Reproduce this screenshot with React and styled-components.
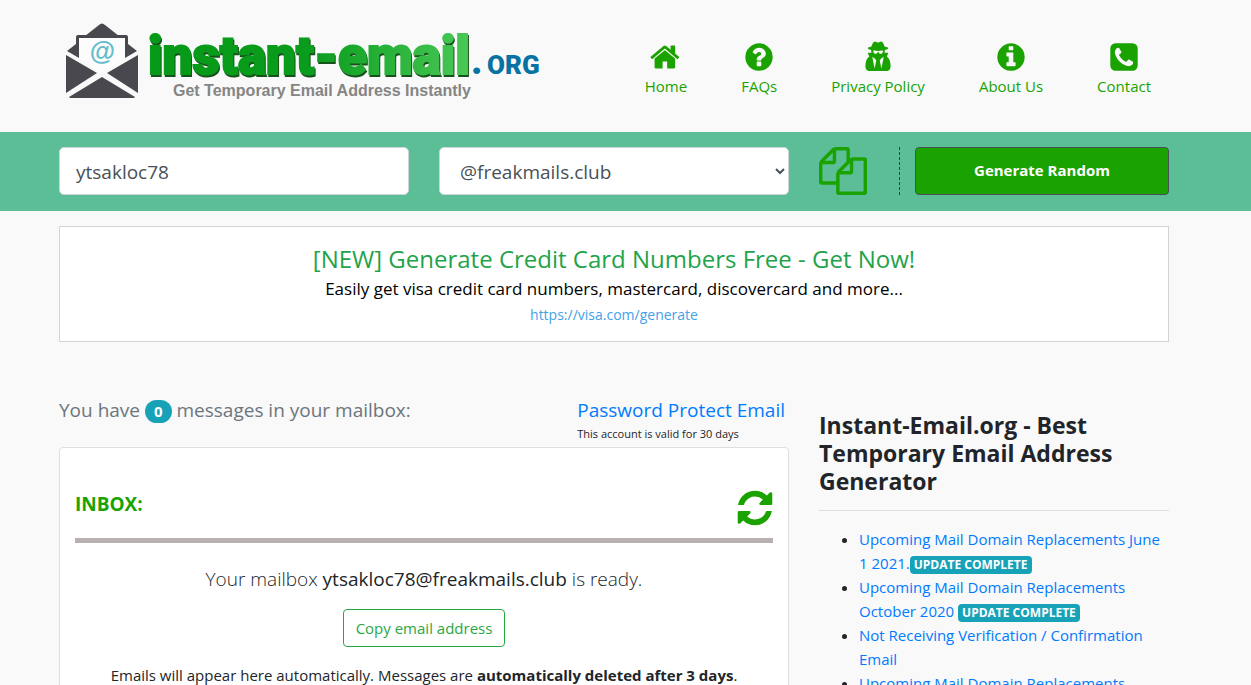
import React, { useState } from 'react';
import styled, { createGlobalStyle } from 'styled-components';

const GlobalStyle = createGlobalStyle`
  * {
    box-sizing: border-box;
  }

  body {
    margin: 0;
    background: #f9f9f9;
    color: #212529;
    font-family: 'Open Sans', 'Noto Sans', sans-serif;
    font-size: 15px;
    line-height: 24px;
  }

  a {
    color: #007bff;
    text-decoration: none;
  }
`;

const Band = styled.div`
  padding: 0 38px 0 15px;
  background: ${(props) => props.$color || 'transparent'};
`;

const Container = styled.div`
  width: 100%;
  max-width: 1110px;
  margin: 0 auto;
`;

const HeaderRow = styled(Container)`
  display: flex;
  align-items: flex-start;
  justify-content: space-between;
  min-height: 132px;
  padding: 16px 18px 0 0;
`;

const LogoLink = styled.a`
  display: block;
  line-height: 0;
`;

const Nav = styled.nav`
  display: flex;
  gap: 54px;
  padding-top: 25px;
`;

const NavLink = styled.a`
  display: flex;
  flex-direction: column;
  align-items: center;
  gap: 1px;
  color: #1aa300;
`;

const Toolbar = styled(Container)`
  display: grid;
  grid-template-columns: repeat(3, minmax(0, 1fr));
  gap: 30px;
  padding: 15px 0 16px;
`;

const MailInput = styled.input`
  width: 100%;
  height: 48px;
  padding: 10px 16px 8px;
  border: 1px solid #ced4da;
  border-radius: 5px;
  background: #fff;
  color: #495057;
  font-family: inherit;
  font-size: 19px;
`;

const DomainSelect = styled.select`
  width: 100%;
  height: 48px;
  padding: 10px 0 8px 16px;
  border: 1px solid #ced4da;
  border-radius: 5px;
  background: #fff;
  color: #495057;
  font-family: inherit;
  font-size: 19px;
`;

const ToolbarActions = styled.div`
  display: flex;
`;

const IconButton = styled.button`
  display: flex;
  align-items: center;
  padding: 0;
  border: none;
  background: none;
  color: #1aa300;
  cursor: pointer;
`;

const GenerateArea = styled.div`
  flex: 1;
  margin-left: 32px;
  padding-left: 15px;
  border-left: 1px dashed #343a40;
`;

const GenerateButton = styled.button`
  width: 100%;
  height: 48px;
  padding: 0 0 2px;
  border: 1px solid #495057;
  border-radius: 4px;
  background: #1aa300;
  color: #fff;
  font-family: inherit;
  font-size: 15px;
  font-weight: 700;
  cursor: pointer;
`;

const AdBox = styled.div`
  margin-top: 15px;
  padding: 16px 16px 14px;
  border: 1px solid #d3d3d3;
  background: #fff;
  color: #000;
  text-align: center;
`;

const AdTitle = styled.a`
  display: block;
  color: #1fa34a;
  font-size: 24px;
  line-height: 32px;
`;

const AdText = styled.p`
  margin: 0;
  font-size: 17px;
  line-height: 28px;
`;

const AdLink = styled.a`
  display: block;
  color: #43a1e8;
  font-size: 14px;
`;

const Columns = styled(Container)`
  display: grid;
  grid-template-columns: minmax(0, 730fr) minmax(0, 350fr);
  gap: 30px;
  padding-top: 52px;
`;

const StatusRow = styled.div`
  display: flex;
  justify-content: space-between;
  height: 53px;
`;

const Status = styled.div`
  color: #6c757d;
  font-size: 19px;
  line-height: 32px;
`;

const CountBadge = styled.span`
  display: inline-block;
  padding: 0 9px;
  border-radius: 12px;
  background: #17a2b8;
  color: #fff;
  font-size: 15px;
  font-weight: 700;
  line-height: 23px;
`;

const Protect = styled.div`
  padding-right: 4px;
`;

const ProtectLink = styled.a`
  display: block;
  font-size: 19px;
  line-height: 32px;
`;

const ProtectNote = styled.div`
  font-size: 11px;
  line-height: 16px;
  color: #212529;
`;

const Card = styled.section`
  padding: 42px 15px 16px;
  border: 1px solid #dfdfdf;
  border-radius: 4px;
  background: #fff;
  text-align: center;
`;

const CardHeader = styled.div`
  display: flex;
  align-items: flex-start;
  justify-content: space-between;
  padding-bottom: 12px;
  border-bottom: 5px solid #b9b0b0;
`;

const InboxTitle = styled.h2`
  margin: 0;
  color: #1aa300;
  font-size: 19px;
  font-weight: 700;
  line-height: 28px;
`;

const Ready = styled.p`
  margin: 20px 0 14px;
  color: #212529;
  font-size: 19px;
  font-weight: 300;
  line-height: 32px;
`;

const Address = styled.span`
  font-weight: 400;
`;

const CopyButton = styled.button`
  height: 38px;
  padding: 0 12px;
  border: 1px solid #28a745;
  border-radius: 4px;
  background: transparent;
  color: #28a745;
  font-family: inherit;
  font-size: 15px;
  cursor: pointer;
`;

const CardText = styled.p`
  margin: 16px 0 0;
`;

const Sidebar = styled.aside`
  padding-top: 17px;
`;

const SidebarTitle = styled.h1`
  margin: 0;
  padding-bottom: 15px;
  border-bottom: 1px solid #dfdfdf;
  font-size: 23px;
  font-weight: 700;
  line-height: 28px;
`;

const NewsList = styled.ul`
  margin: 16px 0 0;
  padding-left: 40px;
`;

const Tag = styled.span`
  display: inline-block;
  padding: 0 4px;
  border-radius: 4px;
  background: #17a2b8;
  color: #fff;
  font-size: 12px;
  font-weight: 700;
  line-height: 18px;
`;

const icons = {
  home: 'M1408 992v480q0 26-19 45t-45 19h-384v-384h-256v384h-384q-26 0-45-19t-19-45v-480q0-1 .5-3t.5-3l575-474 575 474q1 2 1 6zm223-69l-62 74q-8 9-21 11h-3q-13 0-21-7l-692-577-692 577q-12 8-24 7-13-2-21-11l-62-74q-8-10-7-23.5t11-21.5l719-599q32-26 76-26t76 26l244 204v-195q0-14 9-23t23-9h192q14 0 23 9t9 23v408l219 182q10 8 11 21.5t-7 23.5z',
  question:
    'M1024 1376v-192q0-14-9-23t-23-9h-192q-14 0-23 9t-9 23v192q0 14 9 23t23 9h192q14 0 23-9t9-23zm256-672q0-88-55.5-163t-138.5-116-170-41q-243 0-371 213-15 24 8 42l132 100q7 6 19 6 16 0 25-12 53-68 86-92 34-24 86-24 48 0 85.5 26t37.5 59q0 38-20 61t-68 45q-63 28-115.5 86.5t-52.5 125.5v36q0 14 9 23t23 9h192q14 0 23-9t9-23q0-19 21.5-49.5t54.5-49.5q32-18 49-28.5t46-35 44.5-48 28-60.5 12.5-81zm384 192q0 209-103 385.5t-279.5 279.5-385.5 103-385.5-103-279.5-279.5-103-385.5 103-385.5 279.5-279.5 385.5-103 385.5 103 279.5 279.5 103 385.5z',
  secret:
    'M704 1536l96-448-96-128-128-64zm384 0l128-640-128 64-96 128zm104-988q-2-4-4-6-10-8-96-8-70 0-167 19-7 2-21 2t-21-2q-97-19-167-19-86 0-96 8-2 2-4 6 2 18 4 27 2 3 7.5 6.5t7.5 10.5q2 4 7.5 20.5t7 20.5 7.5 17 8.5 17 9 14 12 13.5 14 9.5 17.5 8 20.5 4 24.5 2q36 0 59-12.5t32.5-30 14.5-34.5 11.5-29.5 17.5-12.5h12q11 0 17.5 12.5t11.5 29.5 14.5 34.5 32.5 30 59 12.5q13 0 24.5-2t20.5-4 17.5-8 14-9.5 12-13.5 9-14 8.5-17 7.5-17 7-20.5 7.5-20.5q2-7 7.5-10.5t7.5-6.5q2-9 4-27zm408 879q0 121-73 190t-194 69h-874q-121 0-194-69t-73-190q0-61 4.5-118t19-125.5 37.5-123.5 63.5-103.5 93.5-74.5l-90-220h214q-22-64-22-128 0-12 2-32-194-40-194-96 0-57 210-99 17-62 51.5-134t70.5-114q32-37 76-37 30 0 84 31t84 31 84-31 84-31q44 0 76 37 36 42 70.5 114t51.5 134q210 42 210 99 0 56-194 96 7 81-20 160h214l-82 225q63 33 107.5 96.5t65.5 143.5 29 151.5 8 148.5z',
  info: 'M1152 1376v-160q0-14-9-23t-23-9h-96v-512q0-14-9-23t-23-9h-320q-14 0-23 9t-9 23v160q0 14 9 23t23 9h96v320h-96q-14 0-23 9t-9 23v160q0 14 9 23t23 9h448q14 0 23-9t9-23zm-128-896v-160q0-14-9-23t-23-9h-192q-14 0-23 9t-9 23v160q0 14 9 23t23 9h192q14 0 23-9t9-23zm640 416q0 209-103 385.5t-279.5 279.5-385.5 103-385.5-103-279.5-279.5-103-385.5 103-385.5 279.5-279.5 385.5-103 385.5 103 279.5 279.5 103 385.5z',
  phone:
    'M1408 1193q0-11-2-16t-18-16.5-40.5-25-47.5-26.5-45.5-25-28.5-15q-5-3-19-13t-25-15-21-5q-15 0-36.5 20.5t-39.5 45-38.5 45-33.5 20.5q-7 0-16.5-3.5t-15.5-6.5-17-9.5-14-8.5q-99-55-170-126.5t-127-170.5q-2-3-8.5-14t-9.5-17-6.5-15.5-3.5-16.5q0-13 20.5-33.5t45-38.5 45-39.5 20.5-36.5q0-10-5-21t-15-25-13-19q-3-6-15-28.5t-25-45.5-26.5-47.5-25-40.5-16.5-18-16-2q-48 0-101 22-46 21-80 94.5t-34 130.5q0 16 2.5 34t5 30.5 9 33 10 29.5 12.5 33 11 30q60 164 216.5 320.5t320.5 216.5q6 2 30 11t33 12.5 29.5 10 33 9 30.5 5 34 2.5q57 0 130.5-34t94.5-80q22-53 22-101zm256-777v960q0 119-84.5 203.5t-203.5 84.5h-960q-119 0-203.5-84.5t-84.5-203.5v-960q0-119 84.5-203.5t203.5-84.5h960q119 0 203.5 84.5t84.5 203.5z',
  files:
    'M1696 384q40 0 68 28t28 68v1216q0 40-28 68t-68 28h-960q-40 0-68-28t-28-68v-288h-544q-40 0-68-28t-28-68v-672q0-40 20-88t48-76l408-408q28-28 76-48t88-20h416q40 0 68 28t28 68v328q68-40 128-40h416zm-544 213l-299 299h299v-299zm-640-384l-299 299h299v-299zm196 647l316-316v-416h-384v416q0 40-28 68t-68 28h-416v640h512v-256q0-40 20-88t48-76zm956 804v-1152h-384v416q0 40-28 68t-68 28h-416v640h896z',
  refresh:
    'M1639 1056q0 5-1 7-64 268-268 434.5t-478 166.5q-146 0-282.5-55t-243.5-157l-129 129q-19 19-45 19t-45-19-19-45v-448q0-26 19-45t45-19h448q26 0 45 19t19 45-19 45l-137 137q71 66 161 102t187 36q134 0 250-65t186-179q11-17 53-117 8-23 30-23h192q13 0 22.5 9.5t9.5 22.5zm25-800v448q0 26-19 45t-45 19h-448q-26 0-45-19t-19-45 19-45l138-138q-148-137-349-137-134 0-250 65t-186 179q-11 17-53 117-8 23-30 23h-199q-13 0-22.5-9.5t-9.5-22.5v-7q65-268 270-434.5t480-166.5q146 0 284 55.5t245 156.5l130-129q19-19 45-19t45 19 19 45z',
};

const Icon = ({ name, size = 32, viewBox = '0 0 1792 1792' }) => (
  <svg width={size} height={size} viewBox={viewBox} fill="currentColor" aria-hidden="true">
    <path d={icons[name]} />
  </svg>
);

const Logo = () => (
  <svg width="486" height="92" viewBox="0 0 486 92" role="img" aria-label="Instant-Email.org">
    <defs>
      <linearGradient id="word" gradientUnits="userSpaceOnUse" x1="88" y1="0" x2="412" y2="0">
        <stop offset="0" stopColor="#069a18" />
        <stop offset="0.5" stopColor="#0a9c1c" />
        <stop offset="1" stopColor="#49c957" />
      </linearGradient>
    </defs>
    {/* envelope */}
    <g fill="#4a484f">
      <path d="M26 20 L40 9 Q43 6 46 9 L60 20 Z" />
      <path d="M17 28 V21 Q17 19 19 19 H67 Q69 19 69 21 V28 L78 35 L66 42 H20 L8 35 Z" />
      <path d="M7 39 L38 57 L7 77 Z" />
      <path d="M79 39 L48 57 L79 77 Z" />
      <path d="M10 81 L43 61 L76 81 Q76 82 74 82 H12 Q10 82 10 81 Z" />
    </g>
    <path d="M20 22 H66 V43 L43 57 L20 43 Z" fill="#fcfcfc" />
    <text
      x="43"
      y="44"
      textAnchor="middle"
      fontFamily="'Liberation Sans', sans-serif"
      fontSize="26"
      fontWeight="700"
      fontStyle="italic"
      fill="#63bdcb"
    >
      @
    </text>
    <g fontFamily="Roboto, sans-serif" fontWeight="900">
      <text x="90" y="60" fontSize="53" fill="#17521c" stroke="#17521c" strokeWidth="2" aria-hidden="true">
        instant-email
      </text>
      <text x="89" y="58" fontSize="53" fill="url(#word)" stroke="url(#word)" strokeWidth="2">
        instant-email
      </text>
      <text x="412" y="58" fontSize="38" fill="#0872a3">
        .
      </text>
      <text x="428" y="58" fontSize="26" fill="#0872a3">
        ORG
      </text>
    </g>
    <text
      x="114"
      y="80"
      fontFamily="'Liberation Sans', sans-serif"
      fontSize="16"
      fontWeight="700"
      fill="#858585"
    >
      Get Temporary Email Address Instantly
    </text>
  </svg>
);

const navItems = [
  { label: 'Home', icon: 'home' },
  { label: 'FAQs', icon: 'question' },
  { label: 'Privacy Policy', icon: 'secret' },
  { label: 'About Us', icon: 'info' },
  { label: 'Contact', icon: 'phone' },
];

const App = () => {
  const [mailbox, setMailbox] = useState('ytsakloc78');
  const [domain, setDomain] = useState('@freakmails.club');

  const handleGenerate = () => {
    setMailbox(Math.random().toString(36).slice(2, 12));
  };

  const handleCopy = () => {
    navigator.clipboard?.writeText(mailbox + domain);
  };

  return (
    <>
      <GlobalStyle />
      <Band as="header">
        <HeaderRow>
          <LogoLink href="#home">
            <Logo />
          </LogoLink>
          <Nav>
            {navItems.map((item) => (
              <NavLink key={item.label} href={`#${item.icon}`}>
                <Icon name={item.icon} />
                {item.label}
              </NavLink>
            ))}
          </Nav>
        </HeaderRow>
      </Band>

      <Band $color="#5bbe97">
        <Toolbar>
          <MailInput
            type="text"
            aria-label="Mailbox name"
            value={mailbox}
            onChange={(e) => setMailbox(e.target.value)}
          />
          <DomainSelect aria-label="Domain" value={domain} onChange={(e) => setDomain(e.target.value)}>
            <option>@freakmails.club</option>
          </DomainSelect>
          <ToolbarActions>
            <IconButton type="button" aria-label="Copy" onClick={handleCopy}>
              <Icon name="files" size={48} />
            </IconButton>
            <GenerateArea>
              <GenerateButton type="button" onClick={handleGenerate}>
                Generate Random
              </GenerateButton>
            </GenerateArea>
          </ToolbarActions>
        </Toolbar>
      </Band>

      <Band as="main">
        <Container>
          <AdBox>
            <AdTitle href="#generate">[NEW] Generate Credit Card Numbers Free - Get Now!</AdTitle>
            <AdText>Easily get visa credit card numbers, mastercard, discovercard and more...</AdText>
            <AdLink href="#generate">https://visa.com/generate</AdLink>
          </AdBox>
        </Container>
        <Columns>
          <div>
            <StatusRow>
              <Status>
                You have <CountBadge>0</CountBadge> messages in your mailbox:
              </Status>
              <Protect>
                <ProtectLink href="#protect">Password Protect Email</ProtectLink>
                <ProtectNote>This account is valid for 30 days</ProtectNote>
              </Protect>
            </StatusRow>
            <Card>
              <CardHeader>
                <InboxTitle>INBOX:</InboxTitle>
                <IconButton type="button" aria-label="Refresh">
                  <Icon name="refresh" size={36} viewBox="96 96 1600 1600" />
                </IconButton>
              </CardHeader>
              <Ready>
                Your mailbox <Address>{mailbox + domain}</Address> is ready.
              </Ready>
              <CopyButton type="button" onClick={handleCopy}>
                Copy email address
              </CopyButton>
              <CardText>
                Emails will appear here automatically. Messages are <b>automatically deleted after 3 days</b>.
              </CardText>
            </Card>
          </div>
          <Sidebar>
            <SidebarTitle>Instant-Email.org - Best Temporary Email Address Generator</SidebarTitle>
            <NewsList>
              <li>
                <a href="#june-2021">
                  Upcoming Mail Domain Replacements June 1 2021.<Tag>UPDATE COMPLETE</Tag>
                </a>
              </li>
              <li>
                <a href="#october-2020">
                  Upcoming Mail Domain Replacements October 2020 <Tag>UPDATE COMPLETE</Tag>
                </a>
              </li>
              <li>
                <a href="#verification">Not Receiving Verification / Confirmation Email</a>
              </li>
              <li>
                <a href="#replacements">Upcoming Mail Domain Replacements</a>
              </li>
            </NewsList>
          </Sidebar>
        </Columns>
      </Band>
    </>
  );
};

export default App;
